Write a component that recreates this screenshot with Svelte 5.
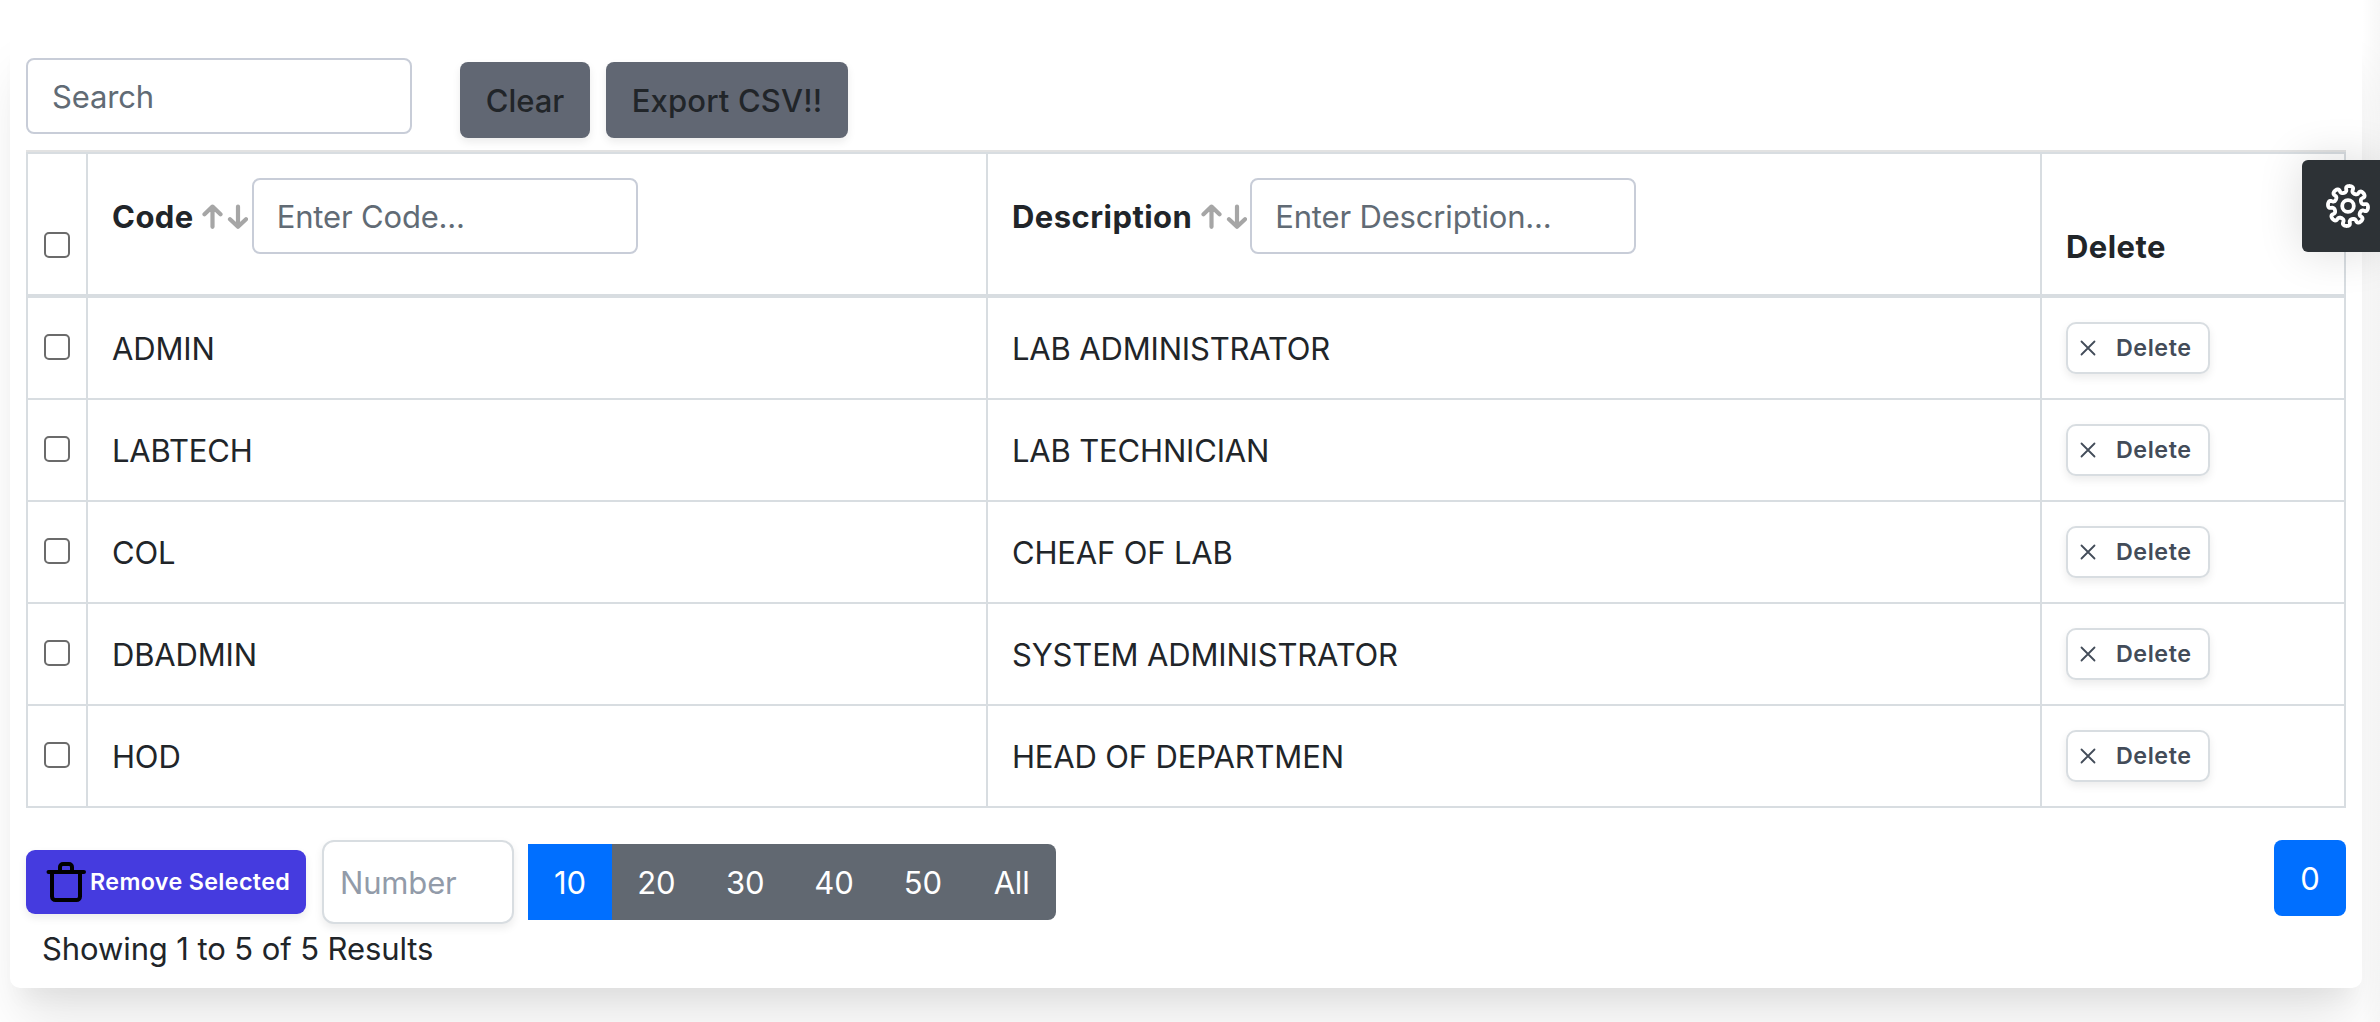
<script>
  const columns = [
    { key: 'code', label: 'Code' },
    { key: 'description', label: 'Description' }
  ];
  const rows = [
    { code: 'ADMIN', description: 'LAB ADMINISTRATOR' },
    { code: 'LABTECH', description: 'LAB TECHNICIAN' },
    { code: 'COL', description: 'CHEAF OF LAB' },
    { code: 'DBADMIN', description: 'SYSTEM ADMINISTRATOR' },
    { code: 'HOD', description: 'HEAD OF DEPARTMEN' }
  ];
  const sizes = ['10', '20', '30', '40', '50', 'All'];
  let pageSize = $state('10');

  // Outline of the eight-toothed gear, sampled around its centre.
  const gear =
    Array.from({ length: 160 }, (_, i) => {
      const a = (i / 160) * Math.PI * 2;
      const r = 16.9 + 3.2 * Math.cos(8 * a);
      const angle = a - Math.PI / 2 + 0.09 + 0.07 * Math.sin(16 * a);
      return `${i ? 'L' : 'M'}${(r * Math.cos(angle)).toFixed(2)} ${(r * Math.sin(angle)).toFixed(2)}`;
    }).join('') + 'Z';
</script>

<div class="page">
  <main class="card">
    <div class="toolbar">
      <input class="field" type="text" placeholder="Search" />
      <div class="actions">
        <button class="dark">Clear</button>
        <button class="dark export">Export CSV!!</button>
      </div>
    </div>

    <div class="table">
      <div class="row head">
        <div class="cell check"><input type="checkbox" aria-label="Select all" /></div>
        {#each columns as column}
          <div class="cell filter">
            <span class="title">{column.label}</span>
            <svg class="sort" width="46" height="26" viewBox="0 0 46 26">
              <path d="M10.5 22.8V2.6M2.5 10.2l8-7.6 8 7.6M36 2.6v20.2M28 15.2l8 7.6 8-7.6" />
            </svg>
            <input class="field" type="text" placeholder="Enter {column.label}..." />
          </div>
        {/each}
        <div class="cell last"><span class="title">Delete</span></div>
      </div>
      {#each rows as row}
        <div class="row">
          <div class="cell check"><input type="checkbox" aria-label="Select {row.code}" /></div>
          <div class="cell text">{row.code}</div>
          <div class="cell text">{row.description}</div>
          <div class="cell">
            <button class="delete">
              <svg width="16" height="16" viewBox="0 0 16 16"><path d="M1.5 1.5l13 13M14.5 1.5l-13 13" /></svg>
              Delete
            </button>
          </div>
        </div>
      {/each}
    </div>

    <div class="footer">
      <button class="remove">
        <svg width="40" height="42" viewBox="0 0 40 42">
          <path d="M2.5 11h35.5M6 11v24.5a3.5 3.5 0 0 0 3.5 3.5h21a3.5 3.5 0 0 0 3.5-3.5V11M14 10V6a3 3 0 0 1 3-3h6a3 3 0 0 1 3 3v4" />
        </svg>
        Remove Selected
      </button>
      <input class="number" type="text" placeholder="Number" />
      <div class="sizes">
        {#each sizes as size}
          <button class:active={pageSize === size} onclick={() => (pageSize = size)}>{size}</button>
        {/each}
      </div>
      <button class="pager">0</button>
    </div>
    <p class="summary">Showing 1 to 5 of 5 Results</p>
  </main>

  <div class="edge"></div>
  <button class="settings" aria-label="Settings">
    <svg width="48" height="48" viewBox="-24 -24 48 48"><path d={gear} /><circle r="5.8" /></svg>
  </button>
</div>

<style>
  :global(body) {
    background: #fff;
  }
  .page {
    position: relative;
    box-sizing: border-box;
    height: 1022px;
    padding: 26px 18px 0 10px;
    overflow: hidden;
    font: 400 31px/48px Inter, 'Liberation Sans', sans-serif;
    letter-spacing: -0.17px;
    color: #212529;
  }
  .page * {
    box-sizing: border-box;
  }
  button,
  input {
    margin: 0;
    font: inherit;
    letter-spacing: inherit;
  }
  button {
    border: 0;
    padding: 0;
    display: flex;
    align-items: center;
    justify-content: center;
  }
  svg {
    flex: none;
    fill: none;
    stroke-linecap: round;
    stroke-linejoin: round;
  }
  .card {
    height: 962px;
    padding: 32px 16px 0;
    border-radius: 10px;
    background: #fff;
    box-shadow:
      0 40px 50px -10px rgba(0, 0, 0, 0.1),
      0 20px 20px -10px rgba(0, 0, 0, 0.04);
  }
  .toolbar {
    display: flex;
    height: 92px;
  }
  .field {
    width: 386px;
    height: 76px;
    padding: 0 24px;
    border: 2px solid #c8cdd8;
    border-radius: 8px;
    background: #fff;
  }
  .filter .field {
    padding: 0 23px;
  }
  .field::placeholder {
    color: #616b75;
    opacity: 1;
  }
  .actions {
    display: flex;
    gap: 16px;
    padding: 4px 0 0 48px;
  }
  .dark {
    width: 130px;
    height: 76px;
    padding-top: 2px;
    border-radius: 8px;
    background: #616773;
    color: #212529;
    font-weight: 500;
    letter-spacing: 0;
    box-shadow: 0 4px 8px rgba(0, 0, 0, 0.08);
  }
  .export {
    width: 242px;
    letter-spacing: 0.15px;
  }
  .table {
    border: 2px solid #d8dde1;
    border-top: 0;
  }
  .row {
    display: grid;
    grid-template-columns: 58px 900px 1054px 304px;
    height: 102px;
    border-top: 2px solid #d8dde1;
  }
  .cell {
    display: flex;
    align-items: center;
    padding-left: 24px;
    border-left: 2px solid #d8dde1;
  }
  .cell.text {
    padding-top: 2px;
  }
  .cell.check {
    padding: 0 0 0 16px;
    border: 0;
  }
  .head {
    height: 144px;
    margin: 0 -2px;
    padding: 0 2px;
    border-top-color: #e2e2e2;
    box-shadow: inset 0 2px #d8dde1;
  }
  .head + .row {
    height: 104px;
    border-top-width: 4px;
  }
  .head .cell {
    margin-top: 2px;
  }
  .head .check {
    padding-top: 44px;
  }
  .head .last {
    padding-top: 46px;
  }
  .head .filter {
    align-items: flex-start;
    padding-top: 24px;
  }
  .title {
    font-weight: 700;
    letter-spacing: 0.45px;
  }
  .filter .title {
    padding-top: 15px;
  }
  .sort {
    margin: 26px 3.5px 0 8.5px;
    stroke: #a6a6a6;
    stroke-width: 4.2;
  }
  input[type='checkbox'] {
    appearance: none;
    width: 26px;
    height: 26px;
    margin-top: -2px;
    border: 2px solid #6b6b6b;
    border-radius: 5px;
    background: #fff;
  }
  .delete {
    width: 144px;
    height: 52px;
    justify-content: flex-start;
    gap: 20px;
    padding-left: 12px;
    border: 2px solid #d8dde1;
    border-radius: 10px;
    background: #fff;
    color: #434c59;
    font-size: 23.3px;
    font-weight: 600;
    letter-spacing: 0.55px;
    box-shadow: 0 4px 8px rgba(0, 0, 0, 0.08);
  }
  .delete svg {
    stroke: #434c59;
    stroke-width: 1.8;
  }
  .footer {
    display: flex;
    align-items: center;
    height: 84px;
    margin-top: 32px;
  }
  .remove {
    width: 280px;
    height: 64px;
    justify-content: flex-start;
    gap: 4px;
    padding-left: 20px;
    border-radius: 9px;
    background: #453bdf;
    color: #fff;
    font-size: 23.3px;
    font-weight: 600;
    letter-spacing: 0.35px;
    box-shadow: 0 4px 8px rgba(0, 0, 0, 0.08);
  }
  .remove svg {
    stroke: #000;
    stroke-width: 4;
  }
  .number {
    width: 192px;
    height: 84px;
    margin: 0 14px 0 16px;
    padding: 0 16px;
    border: 2px solid #d8dde1;
    border-radius: 12px;
    background: #fff;
    box-shadow: 0 4px 8px rgba(0, 0, 0, 0.08);
  }
  .number::placeholder {
    color: #929ba9;
    opacity: 1;
  }
  .sizes {
    display: flex;
    height: 76px;
    overflow: hidden;
    border-radius: 0 8px 8px 0;
  }
  .sizes button {
    width: 88.8px;
    padding-top: 2px;
    background: #616871;
    color: #fff;
  }
  .sizes .active {
    width: 84px;
    background: #006fff;
  }
  .pager {
    width: 72px;
    height: 76px;
    margin: 0 0 8px auto;
    padding-top: 2px;
    border-radius: 8px;
    background: #006fff;
    color: #fff;
  }
  .summary {
    margin: 1px 0 0 16px;
    letter-spacing: -0.1px;
  }
  .edge {
    position: absolute;
    top: 0;
    right: 0;
    width: 18px;
    height: 100%;
    background: linear-gradient(90deg, rgba(0, 0, 0, 0), rgba(0, 0, 0, 0.03));
  }
  .settings {
    position: absolute;
    top: 160px;
    right: 0;
    width: 78px;
    height: 92px;
    padding-left: 14px;
    border-radius: 6px 0 0 6px;
    background: #2d3236;
    box-shadow: 0 0 46px rgba(0, 0, 0, 0.14);
  }
  .settings svg {
    stroke: #fff;
    stroke-width: 3.8;
  }
</style>
